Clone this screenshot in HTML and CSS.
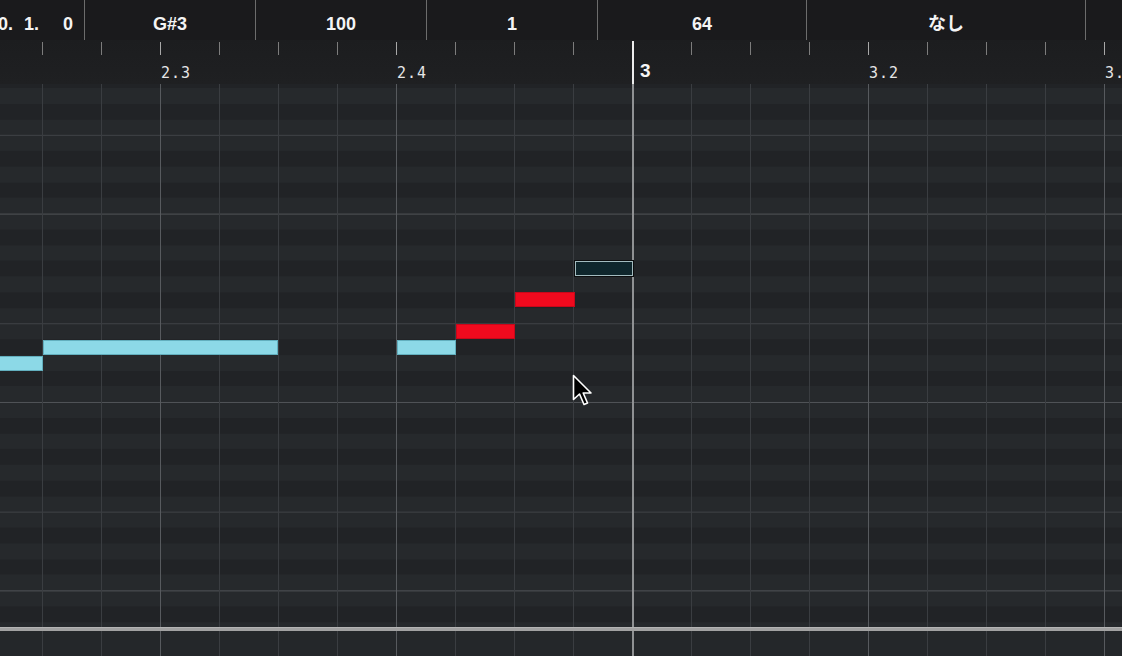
FILE: index.html
```html
<!DOCTYPE html>
<html>

<head>
    <title>Key Editor</title>
    <meta charset="UTF-8">
    <link rel="stylesheet" href="styles.css">
</head>

<body>
    <!-- info line -->
    <div class="info">
        <div class="cell pos"><span class="f1">0.</span><span class="f2">1.</span><span>0</span></div>
        <div class="cell w171">G#3</div>
        <div class="cell w171">100</div>
        <div class="cell w171">1</div>
        <div class="cell w209">64</div>
        <div class="cell w279">なし</div>
        <div class="cell rest"></div>
    </div>

    <!-- ruler -->
    <div class="ruler cols">
        <div class="rc"></div>
        <div class="rc"><i></i></div>
        <div class="rc"><i></i></div>
        <div class="rc beat"><i></i><span class="lbl">2.3</span></div>
        <div class="rc"><i></i></div>
        <div class="rc"><i></i></div>
        <div class="rc"><i></i></div>
        <div class="rc beat"><i></i><span class="lbl">2.4</span></div>
        <div class="rc"><i></i></div>
        <div class="rc"><i></i></div>
        <div class="rc"><i></i></div>
        <div class="rc bar"><i></i><span class="num">3</span></div>
        <div class="rc"><i></i></div>
        <div class="rc"><i></i></div>
        <div class="rc"><i></i></div>
        <div class="rc beat"><i></i><span class="lbl">3.2</span></div>
        <div class="rc"><i></i></div>
        <div class="rc"><i></i></div>
        <div class="rc"><i></i></div>
        <div class="rc beat"><i></i><span class="lbl">3.3</span></div>
    </div>

    <!-- note grid -->
    <div class="editor">
        <div class="lines cols">
            <div class="c0"></div>
            <div></div>
            <div></div>
            <div class="bt"></div>
            <div></div>
            <div></div>
            <div></div>
            <div class="bt"></div>
            <div></div>
            <div></div>
            <div></div>
            <div class="br"></div>
            <div></div>
            <div></div>
            <div></div>
            <div class="bt"></div>
            <div></div>
            <div></div>
            <div></div>
            <div class="bt"></div>
        </div>

        <div class="roll"></div>
        <div class="split"></div>
        <div class="lane"></div>

        <div class="note on" style="left:-2px; top:272px; width:45px"></div>
        <div class="note on" style="left:43px; top:256px; width:235px"></div>
        <div class="note on" style="left:397px; top:256px; width:59px"></div>
        <div class="note sel" style="left:456px; top:240px; width:59px"></div>
        <div class="note sel" style="left:515px; top:208px; width:60px"></div>
        <div class="note ghost" style="left:575px; top:177px; width:58px"></div>

        <svg class="cursor" width="22" height="34" viewBox="0 0 22 34">
            <path d="M1.5 1.5 L1.5 25.5 L7.5 20 L12 30.5 L15.5 29 L11.2 19 L19 19 Z" fill="#000" stroke="#fff" stroke-width="1.6" stroke-linejoin="round"/>
        </svg>
    </div>
</body>

</html>
```

FILE: styles.css
```css
* {
    margin: 0;
    padding: 0;
    box-sizing: border-box;
}

body {
    width: 1122px;
    height: 656px;
    overflow: hidden;
    background: #232528;
    font-family: "Liberation Sans", "Noto Sans CJK JP", Arial, sans-serif;
}

/* info line */

.info {
    display: flex;
    height: 40px;
    background: #1a1a1c;
}

.cell {
    flex: none;
    padding-top: 12px;
    line-height: 24px;
    font-size: 18px;
    font-weight: bold;
    color: #f4f4f4;
    text-align: center;
    border-left: 1px solid #6c6c6c;
    white-space: nowrap;
}

.pos {
    width: 84px;
    display: flex;
    justify-content: flex-end;
    padding-right: 11px;
    border-left: 0;
    overflow: hidden;
}

.pos .f1 {
    margin-right: 11px;
}

.pos .f2 {
    margin-right: 24px;
}

.w171 {
    width: 171px;
}

.w209 {
    width: 209px;
}

.w279 {
    width: 279px;
}

.rest {
    flex: 1;
}

/* shared column grid */

.cols {
    display: grid;
    grid-template-columns: 42px repeat(18, 59px) 1fr;
}

/* ruler */

.ruler {
    height: 44px;
    background: linear-gradient(#1c1d1f, #1f2022);
}

.rc {
    display: flex;
    flex-direction: column;
    align-items: flex-start;
    overflow: hidden;
}

.rc i {
    display: block;
    width: 1px;
    height: 13px;
    margin-top: 2px;
    background: #7c7c7c;
}

.rc.beat i {
    background: #a8a8a8;
}

.lbl {
    margin-top: 11px;
    padding-left: 1px;
    font-family: "DejaVu Sans Mono", "Liberation Mono", monospace;
    font-size: 15px;
    line-height: 15px;
    letter-spacing: 1px;
    color: #e6e6e6;
    white-space: nowrap;
}

.rc.bar {
    flex-direction: row;
}

.rc.bar i {
    width: 2px;
    height: 43px;
    margin-top: 1px;
    background: #ececec;
}

.num {
    margin-top: 21px;
    margin-left: 6px;
    font-size: 19px;
    line-height: 19px;
    font-weight: bold;
    color: #f6f6f6;
}

/* editor */

.editor {
    position: relative;
    height: 572px;
}

.lines {
    position: absolute;
    top: 0;
    left: 0;
    right: 0;
    bottom: 0;
    z-index: 1;
}

.lines div {
    border-left: 1px solid #3a3d41;
}

.lines .c0 {
    border-left: 0;
}

.lines .bt {
    border-left-color: #575a5e;
}

.lines .br {
    border-left: 2px solid #8f9193;
}

.roll {
    height: 543px;
    background-image: linear-gradient(to bottom,
        #505357 0px, #505357 1px,
        #26292c 1px, #26292c 15.7px,
        #212326 15.7px, #212326 31.4px,
        #26292c 31.4px, #26292c 47.1px,
        #212326 47.1px, #212326 62.8px,
        #26292c 62.8px, #26292c 78.5px,
        #212326 78.5px, #212326 94.2px,
        #26292c 94.2px, #26292c 109.9px,
        #3f4246 109.9px, #3f4246 110.9px,
        #26292c 110.9px, #26292c 125.6px,
        #212326 125.6px, #212326 141.3px,
        #26292c 141.3px, #26292c 157px,
        #212326 157px, #212326 172.7px,
        #26292c 172.7px, #26292c 188.4px);
    background-size: 100% 188.4px;
    background-position: 0 129.6px;
}

.split {
    position: relative;
    z-index: 2;
    height: 4px;
    background: #a2a2a2;
    border-top: 1px solid #b4b4b4;
}

.lane {
    height: 25px;
    background: #24272a;
}

/* notes */

.note {
    position: absolute;
    z-index: 2;
    height: 15px;
}

.note.on {
    background: #8cd9e7;
    border: 1px solid #62afbe;
}

.note.sel {
    background: #f00a1e;
    border: 1px solid #c9071a;
}

.note.ghost {
    background: #0f262c;
    border: 1px solid #a3bbbf;
    outline: 1px solid #0c0d0e;
}

.cursor {
    position: absolute;
    z-index: 3;
    left: 572px;
    top: 290px;
}
```
